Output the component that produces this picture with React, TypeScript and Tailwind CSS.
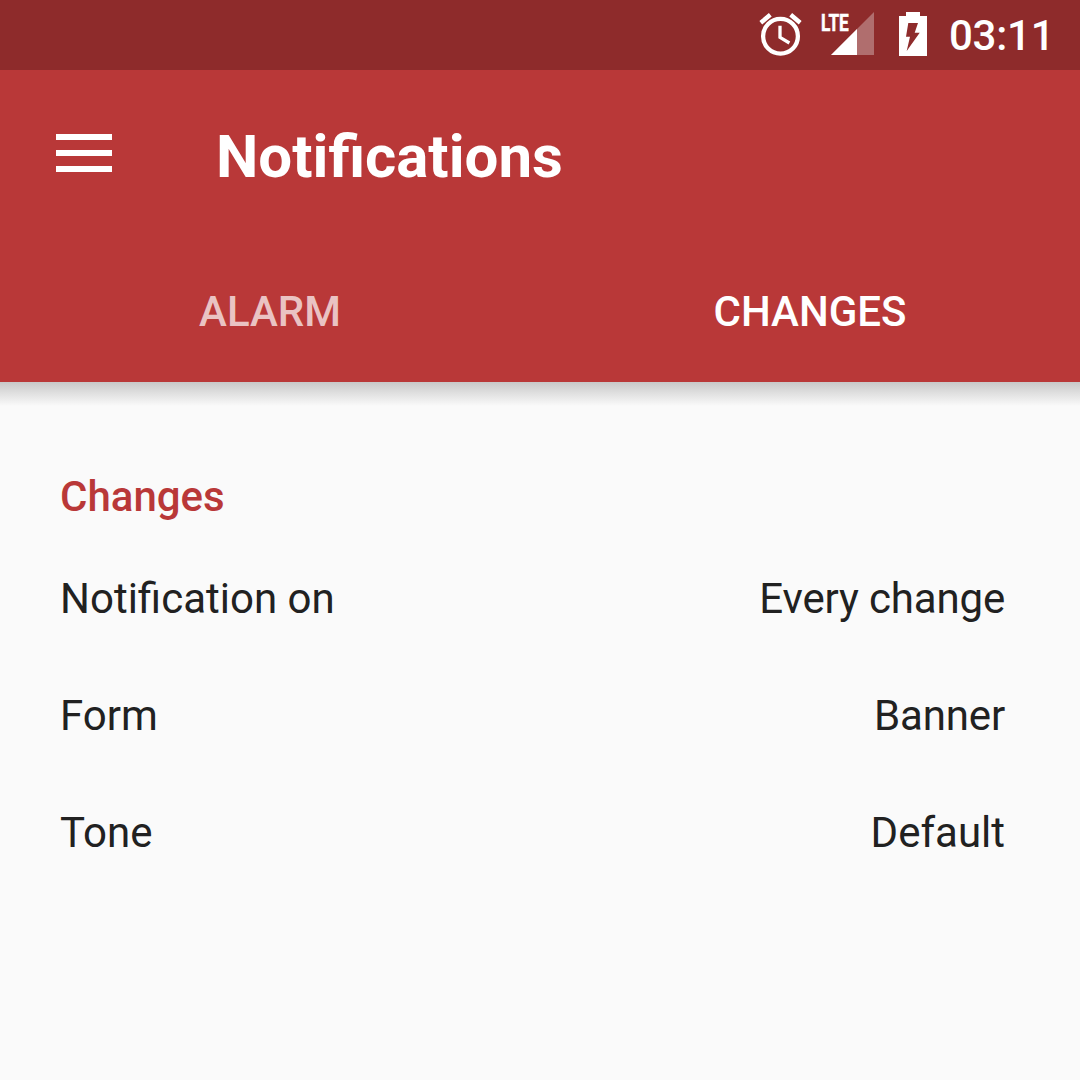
import React from "react";

const settings = [
  { label: "Notification on", value: "Every change", tracking: "tracking-[-0.16px]" },
  { label: "Form", value: "Banner", tracking: "tracking-[-0.15px]" },
  { label: "Tone", value: "Default", tracking: "tracking-normal" },
];

function AlarmIcon() {
  return (
    <svg className="h-[50px] w-[50px] shrink-0" viewBox="755 10 50 50" fill="none" stroke="#fff">
      <circle cx="780.5" cy="36.2" r="17.4" strokeWidth="4.3" />
      <path d="M760.8 22.7L770.3 14.7M800.2 22.7L790.7 14.7" strokeWidth="4.4" />
      <path d="M780 25.7V37.4L789.4 43" strokeWidth="3.3" />
    </svg>
  );
}

function SignalIcon() {
  return (
    <svg className="ml-2 h-[70px] w-[62px] shrink-0 overflow-visible" viewBox="813 0 62 70">
      <path d="M874 12V55H831Z" fill="#b06e6e" />
      <path d="M857 29V55H831Z" fill="#fff" />
      <text
        x="821"
        y="31.4"
        fontSize="24.4"
        fontWeight="700"
        textLength="27.8"
        lengthAdjust="spacingAndGlyphs"
        fill="#fff"
        stroke="#fff"
        strokeWidth="0.5"
      >
        LTE
      </text>
    </svg>
  );
}

function BatteryIcon() {
  return (
    <svg className="ml-6 h-[50px] w-[28px] shrink-0" viewBox="899 10 28 50">
      <path
        d="M906 12H920V16H927V56H899V16H906ZM908.3 23L906 36.7H910L906.7 51L919.7 32.7H914.7L918 23Z"
        fill="#fff"
        fillRule="evenodd"
      />
    </svg>
  );
}

export default function App() {
  return (
    <div className="h-[1080px] w-[1080px] overflow-hidden bg-[#fafafa] font-['Roboto',sans-serif] text-[#212121]">
      <div className="flex h-[70px] items-center bg-[#8e2b2b] pl-[755px]">
        <AlarmIcon />
        <SignalIcon />
        <BatteryIcon />
        <div className="ml-[22px] pt-px text-[42px] font-medium leading-[49px] tracking-[-0.25px] text-white">03:11</div>
      </div>
      <header className="flex h-[312px] flex-col bg-[#b93838] text-white">
        <div className="flex h-[166px] items-center pl-14">
          <div className="flex h-[38px] w-14 flex-col justify-between">
            <div className="h-1.5 bg-white" />
            <div className="h-1.5 bg-white" />
            <div className="h-1.5 bg-white" />
          </div>
          <h1 className="ml-[104px] pt-[7px] text-[60px] font-bold leading-[71px]">Notifications</h1>
        </div>
        <nav className="grid h-[146px] grid-cols-2 items-center pt-[5px] text-center text-[42px] font-medium leading-[49px]">
          <div className="text-[#eac3c3]">ALARM</div>
          <div>CHANGES</div>
        </nav>
      </header>
      <div className="h-6 bg-linear-to-b from-[#c8c8c8] via-[#dfdfdf] via-45% to-[#fafafa]" />
      <main className="px-[60px] pt-[66px] text-[42px] leading-[49px]">
        <h2 className="font-medium text-[#b93838]">Changes</h2>
        <div className="mt-[19px] pr-[15px]">
          {settings.map((s) => (
            <div key={s.label} className="flex h-[117px] items-center justify-between">
              <span>{s.label}</span>
              <span className={s.tracking}>{s.value}</span>
            </div>
          ))}
        </div>
      </main>
    </div>
  );
}
